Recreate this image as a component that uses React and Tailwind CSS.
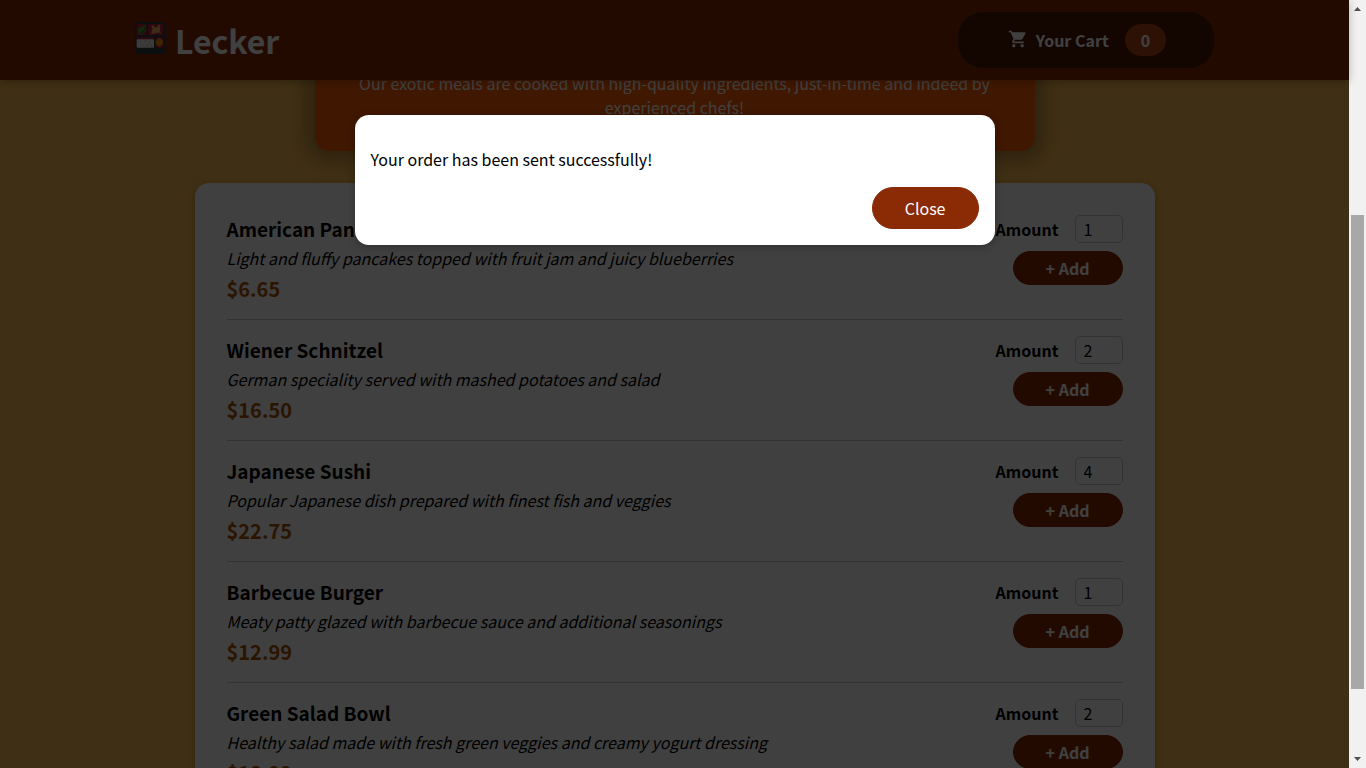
import { MdShoppingCart } from 'react-icons/md';

const meals = [
  { id: 'm1', name: 'American Pancakes', description: 'Light and fluffy pancakes topped with fruit jam and juicy blueberries', price: '$6.65', amount: 1 },
  { id: 'm2', name: 'Wiener Schnitzel', description: 'German speciality served with mashed potatoes and salad', price: '$16.50', amount: 2 },
  { id: 'm3', name: 'Japanese Sushi', description: 'Popular Japanese dish prepared with finest fish and veggies', price: '$22.75', amount: 4 },
  { id: 'm4', name: 'Barbecue Burger', description: 'Meaty patty glazed with barbecue sauce and additional seasonings', price: '$12.99', amount: 1 },
  { id: 'm5', name: 'Green Salad Bowl', description: 'Healthy salad made with fresh green veggies and creamy yogurt dressing', price: '$18.99', amount: 2 },
];

function BentoIcon() {
  return (
    <svg viewBox="0 0 30 32" className="mb-1 h-8 w-[30px]" aria-hidden="true">
      <rect width="30" height="32" rx="3" fill="#303c42" />
      <rect x="1.700" y="2" width="9.800" height="11.300" rx="1" fill="#b8203c" />
      <rect x="13" y="2" width="15.300" height="11.300" rx="1" fill="#b8203c" />
      <rect x="1.700" y="15.300" width="17.300" height="10.400" rx="1" fill="#b8203c" />
      <rect x="20.700" y="15.300" width="7.600" height="10.400" rx="1" fill="#b8203c" />
      <path d="m3 7 2-2 1.500.5L9.500 2.500 10.500 6l.3 3-1.800 1-2 2.500-3-.5-.7-2z" fill="#4f9a3a" />
      <path d="M5 11c2 0 4-2 5-5" fill="none" stroke="#2f6b28" strokeWidth="1.300" />
      <path d="m16 4 2.500-.5L20 6l3-1.500.5-2 1.500.5-.5 2 1 2-1 1.500 1.500 2.500-3-.5-2 1-.5-1-2 1-2.500 1L17 9l-1-1 2-.5z" fill="#f2b45c" />
      <rect x="1.700" y="17.300" width="17.300" height="8.400" rx="1" fill="#f0f0f0" />
      <path d="M5 20h1M10 19h1M14 21h1M7 23h1M12 23h1M16 24h1" stroke="#90a4ae" />
      <path d="m24.300 16 3.700 2.500-.4 4-3.300 2.200-3.300-2.200-.4-4z" fill="#f59300" />
    </svg>
  );
}

function Header() {
  return (
    <header className="relative z-10 flex h-20 shrink-0 items-center justify-between bg-[#8a2b06] px-[10%] text-white shadow-[0_2px_8px_rgba(0,0,0,0.25)]">
      <h1 className="flex items-center gap-2.5 text-[32px] font-bold">
        <BentoIcon />
        Lecker
      </h1>
      <button type="button" className="flex h-14 w-64 items-center justify-end rounded-[25px] bg-[#4d1601] px-12 text-base font-bold">
        <MdShoppingCart className="mr-2 mb-0.5 size-5" aria-hidden="true" />
        <span>Your Cart</span>
        <span className="ml-4 rounded-[25px] bg-[#b94517] px-4 py-1 leading-6">0</span>
      </button>
    </header>
  );
}

function Meal({ meal }) {
  return (
    <li className="flex h-[121px] items-start justify-between border-b border-[#cccccc] pt-4 last:border-0">
      <div>
        <h3 className="text-[19px] leading-7 font-bold">{meal.name}</h3>
        <p className="mt-[3px] text-base leading-6 italic">{meal.description}</p>
        <p className="mt-[5px] text-xl leading-7 font-bold text-[#ad5502]">{meal.price}</p>
      </div>
      <form className="flex flex-col items-end gap-2" onSubmit={(e) => e.preventDefault()}>
        <div className="flex items-center gap-4">
          <label htmlFor={meal.id} className="font-bold">Amount</label>
          <input id={meal.id} type="number" min="1" max="5" defaultValue={meal.amount} className="h-7 w-12 appearance-none rounded-[5px] border border-[#cccccc] pl-2" />
        </div>
        <button type="submit" className="h-[34px] rounded-[20px] border border-[#8a2b06] bg-[#8a2b06] px-8 font-bold text-white">+ Add</button>
      </form>
    </li>
  );
}

function Modal() {
  return (
    <div className="absolute inset-0 z-20 flex items-start justify-center bg-black/75 pt-[115px]">
      <div role="dialog" aria-modal="true" className="w-160 rounded-[14px] bg-white p-4 shadow-[0_2px_8px_rgba(0,0,0,0.25)]">
        <p className="my-4 leading-6">Your order has been sent successfully!</p>
        <div className="flex justify-end">
          <button type="button" className="rounded-[25px] border border-[#8a2b06] bg-[#8a2b06] px-8 py-2 leading-6 text-white">Close</button>
        </div>
      </div>
    </div>
  );
}

function ScrollBar() {
  return (
    <div className="flex w-[17px] shrink-0 flex-col items-center bg-[#f1f1f1]" aria-hidden="true">
      <svg viewBox="0 0 17 17" className="size-[17px]"><path d="M5 11h7L8.500 7z" fill="#505050" /></svg>
      <div className="grow-[198]" />
      <div className="w-[13px] grow-[474] bg-[#a8a8a8]" />
      <div className="grow-[62]" />
      <svg viewBox="0 0 17 17" className="size-[17px]"><path d="M5 6h7l-3.500 4z" fill="#505050" /></svg>
    </div>
  );
}

export default function App() {
  return (
    <div className="flex h-screen overflow-hidden font-['Noto_Sans_CJK_JP',sans-serif] text-base text-black">
      <div className="relative flex min-w-0 flex-1 flex-col bg-[#fcbc50]">
        <Header />
        <main className="min-h-0 flex-1 overflow-hidden">
          <section className="mx-auto -mt-[9px] w-180 rounded-b-[14px] bg-[#ff5c00] px-8 pb-8 text-center leading-6 text-white shadow-[0_1px_18px_10px_rgba(0,0,0,0.25)]">
            <p>Our exotic meals are cooked with high-quality ingredients, just-in-time and indeed by experienced chefs!</p>
          </section>
          <section className="mx-auto mt-8 w-240 rounded-[14px] bg-white px-8 py-4 shadow-[0_2px_8px_rgba(0,0,0,0.25)]">
            <ul>
              {meals.map((meal) => <Meal key={meal.id} meal={meal} />)}
            </ul>
          </section>
        </main>
        <Modal />
      </div>
      <ScrollBar />
    </div>
  );
}
